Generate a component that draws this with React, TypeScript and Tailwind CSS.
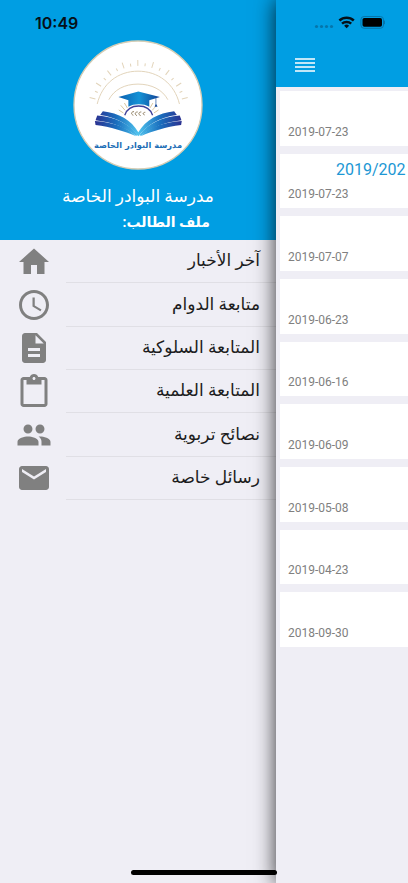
import type { IconType } from "react-icons";
import {
  MdAccessTime,
  MdContentPaste,
  MdDescription,
  MdEmail,
  MdHome,
  MdPeople,
} from "react-icons/md";

interface MenuItem {
  label: string;
  icon: IconType;
}

interface Post {
  date: string;
  title?: string;
}

const menuItems: MenuItem[] = [
  { label: "آخر الأخبار", icon: MdHome },
  { label: "متابعة الدوام", icon: MdAccessTime },
  { label: "المتابعة السلوكية", icon: MdDescription },
  { label: "المتابعة العلمية", icon: MdContentPaste },
  { label: "نصائح تربوية", icon: MdPeople },
  { label: "رسائل خاصة", icon: MdEmail },
];

const posts: Post[] = [
  { date: "2019-07-23" },
  { date: "2019-07-23", title: "2019/202" },
  { date: "2019-07-07" },
  { date: "2019-06-23" },
  { date: "2019-06-16" },
  { date: "2019-06-09" },
  { date: "2019-05-08" },
  { date: "2019-04-23" },
  { date: "2018-09-30" },
];

// sun rays, degrees from straight up
const rays = [-75, -66, -57, -47, -38, -28, -19, -10, -1, 8, 17, 27, 37, 47, 57, 66, 75];

function SchoolLogo() {
  return (
    <svg viewBox="22 15 392 392" className="size-[130px]" role="img" aria-label="مدرسة البوادر الخاصة">
      <defs>
        <linearGradient id="cap" x1="0" x2="1">
          <stop offset="0" stopColor="#0b5fb0" />
          <stop offset="0.5" stopColor="#1593d6" />
          <stop offset="1" stopColor="#123f93" />
        </linearGradient>
        <linearGradient id="book" x1="88" x2="350" gradientUnits="userSpaceOnUse">
          <stop offset="0" stopColor="#2b3190" />
          <stop offset="0.25" stopColor="#1a6fbe" />
          <stop offset="0.5" stopColor="#4fc3ee" />
          <stop offset="0.75" stopColor="#1a6fbe" />
          <stop offset="1" stopColor="#2b3190" />
        </linearGradient>
      </defs>
      <circle cx="218" cy="211" r="193" fill="#fff" stroke="#d6cdb4" strokeWidth="4" />
      <g fill="none" stroke="#e2d4ba" strokeWidth="3">
        <path d="M95 208C110 146 158 109 218 109s110 37 125 99" />
        <path d="M130 195c16-30 47-47 88-47s74 17 90 47" />
        {rays.map((a, i) => (
          <path key={a} d={i % 2 ? "M220 93v-9" : "M220 93v-18"} transform={`rotate(${a} 220 228)`} />
        ))}
      </g>
      <g stroke="#d9c79f" strokeWidth="3">
        <path d="M160 226l14 9M166 212l13 15M177 205l9 15M280 226l-14 9M274 212l-13 15M263 205l-9 15" />
      </g>
      <path d="M178 242c6-18 20-28 42-28s36 10 42 28" fill="none" stroke="#3d3f99" strokeWidth="4" />
      <path
        d="M204 242c-8-3-7-11 2-11M215 243c-8-3-7-11 2-11M226 243c-8-3-7-11 2-11M238 241c-7-2-5-8 2-8"
        fill="none"
        stroke="#8d7d60"
        strokeWidth="3"
      />
      <path d="M159 187l60-17 65 17-32 10v19c-16-10-47-10-63 0v-19z" fill="url(#cap)" />
      <path d="M272 190v17" stroke="#174a99" strokeWidth="2" />
      <path d="M268 216l4-10 5 10z" fill="#174a99" />
      <g fill="url(#book)">
        <path d="M112 230c48 5 86 27 107 63 22-36 60-58 108-63l8 11c-52 7-91 30-116 64-25-34-65-57-115-64z" />
        <path d="M95 243c54 4 96 24 122 59l-5 2c-32-26-72-41-122-47z" />
        <path d="M344 243c-54 4-96 24-122 59l5 2c32-26 72-41 122-47z" />
        <path d="M88 259c50 3 94 16 124 46-36-16-76-28-122-34z" />
        <path d="M350 259c-50 3-94 16-124 46 36-16 76-28 122-34z" />
      </g>
      <text
        x="218"
        y="342"
        textAnchor="middle"
        direction="rtl"
        className="fill-[#1b6db5] font-['DejaVu_Sans',sans-serif] text-[25px] font-bold"
      >
        مدرسة البوادر الخاصة
      </text>
    </svg>
  );
}

function StatusIcons() {
  return (
    <svg viewBox="0 0 72 14" className="h-[14px] w-[72px]" aria-hidden="true">
      <g fill="#0575ab">
        <circle cx="3.5" cy="11.5" r="1.6" />
        <circle cx="8.5" cy="11.5" r="1.6" />
        <circle cx="13.5" cy="11.5" r="1.6" />
        <circle cx="18.5" cy="11.5" r="1.6" />
      </g>
      <g fill="none" stroke="#061018" strokeWidth="2.5">
        <path d="M26.4 5.5a10.6 10.6 0 0 1 14.4 0" />
        <path d="M29 8.7a6.8 6.8 0 0 1 9.2 0" />
      </g>
      <path d="M33.6 13.3l-2.5-2.6a3.7 3.7 0 0 1 5 0z" fill="#061018" />
      <rect x="47.9" y="1.5" width="22.6" height="11.8" rx="3.2" fill="none" stroke="#0575ab" />
      <rect x="49.5" y="3" width="19.5" height="8.8" rx="1.8" fill="#000" />
      <path d="M71.5 5.6v3.6" stroke="#0575ab" />
    </svg>
  );
}

export default function App() {
  return (
    <div className="relative flex min-h-screen overflow-hidden bg-[#efeef5] font-['Roboto','DejaVu_Sans',sans-serif]">
      <aside className="w-[276px] shrink-0">
        <header className="flex h-[240px] flex-col items-center bg-[#009ee3] text-white">
          <div className="h-10 w-full pt-3 pl-[35px] font-['Inter',sans-serif] text-base leading-[22px] font-semibold text-[#061018]">
            10:49
          </div>
          <SchoolLogo />
          <h1 dir="rtl" className="mt-3 text-[17px] leading-7 whitespace-nowrap">
            مدرسة البوادر الخاصة
          </h1>
          <p dir="rtl" className="w-[144px] text-sm leading-6 font-bold">
            ملف الطالب:
          </p>
        </header>
        <nav>
          <ul className="grid h-[260px] grid-rows-6">
            {menuItems.map(({ label, icon: Icon }) => (
              <li key={label}>
                <button type="button" className="flex h-full w-full items-center pl-4">
                  <Icon className="size-9 shrink-0 text-[#808080]" />
                  <span
                    dir="rtl"
                    className="ml-[14px] flex h-full flex-1 items-center border-b border-[#e0dfe5] pr-4 text-[17px] text-[#1c1c20]"
                  >
                    {label}
                  </span>
                </button>
              </li>
            ))}
          </ul>
        </nav>
      </aside>

      <main className="min-w-0 flex-1 bg-[#efeef5] shadow-[0_0_20px_rgba(0,0,0,0.8)]">
        <header className="flex h-[87px] flex-col bg-[#009ee3]">
          <div className="pt-[15px] pl-[37px]">
            <StatusIcons />
          </div>
          <button type="button" aria-label="القائمة" className="mt-7 ml-[19px] w-5">
            <svg viewBox="0 0 20 16" className="h-4 w-5" stroke="#fff" strokeWidth="1.6">
              <path d="M0 2h20M0 6h20M0 10h20M0 14h20" />
            </svg>
          </button>
        </header>
        <ul className="mt-1 ml-1 grid h-[556px] grid-rows-9 gap-2">
          {posts.map((post, i) => (
            <li key={i} className="flex min-h-0 flex-col justify-end bg-white pb-[6px] pl-2">
              {post.title && (
                <h2 className="mb-1 pl-12 text-base leading-6 whitespace-nowrap text-[#1c97d4]">{post.title}</h2>
              )}
              <time dateTime={post.date} className="text-xs leading-4 text-[#808080]">
                {post.date}
              </time>
            </li>
          ))}
        </ul>
      </main>

      <div className="absolute bottom-2 left-[131px] h-[5px] w-[146px] rounded-full bg-black" />
    </div>
  );
}
